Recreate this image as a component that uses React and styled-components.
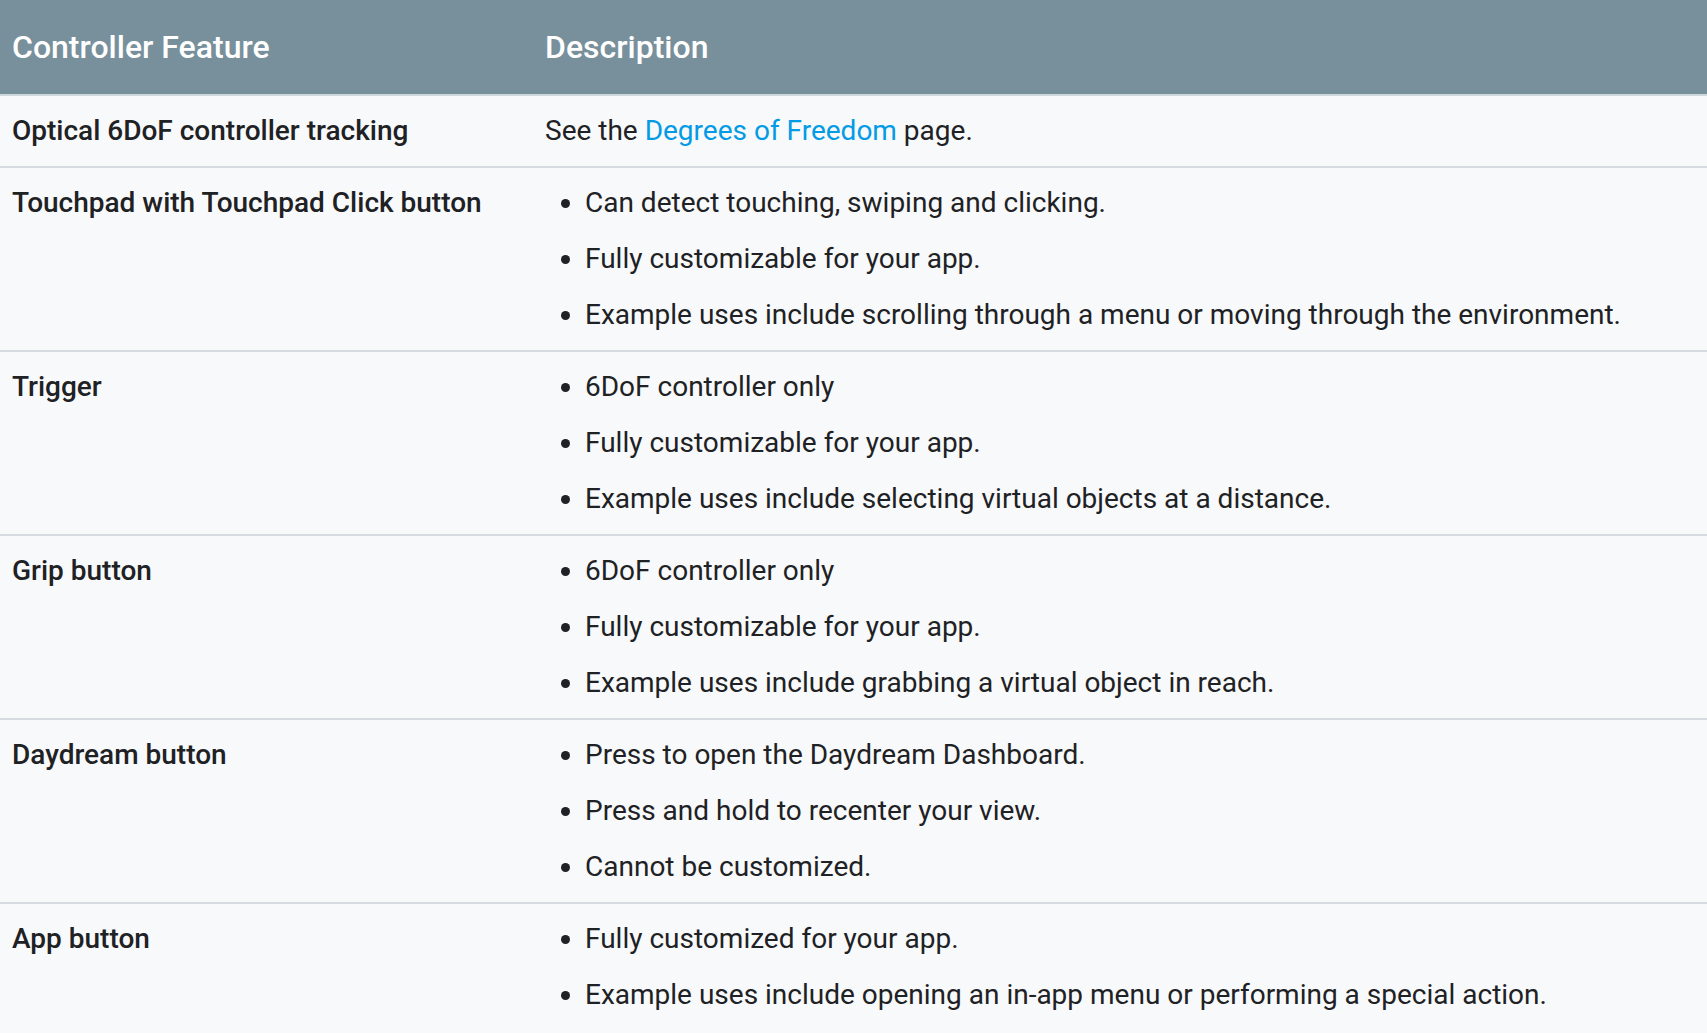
import React from 'react';
import styled, { createGlobalStyle } from 'styled-components';

const GlobalStyle = createGlobalStyle`
  html, body {
    margin: 0;
    padding: 0;
    background: #f8f9fa;
  }
  body {
    font-family: Roboto, "Noto Sans", "Liberation Sans", sans-serif;
    color: #202124;
  }
`;

const Table = styled.table`
  width: 100%;
  border-collapse: collapse;
  table-layout: fixed;
  background: #f8f9fa;
`;

const HeadCell = styled.th`
  background: #78909c;
  color: #fff;
  text-align: left;
  font-size: 32px;
  font-weight: 500;
  line-height: 42px;
  padding: 26px 12px;
  border-bottom: 2px solid #cfd8dc;
  width: ${(p) => p.$width || 'auto'};
`;

const Row = styled.tr`
  & + & td {
    border-top: 2px solid #d5dbe0;
  }
`;

const FeatureCell = styled.td`
  vertical-align: top;
  padding: 14px 12px;
  font-size: 28px;
  line-height: 42px;
  font-weight: 500;
`;

const DescCell = styled.td`
  vertical-align: top;
  padding: 14px 12px;
  font-size: 28px;
  line-height: 42px;
  font-weight: 400;
`;

const List = styled.ul`
  margin: 0;
  padding-left: 40px;
`;

const Item = styled.li`
  & + & {
    margin-top: 14px;
  }
`;

const Link = styled.a`
  color: #039be5;
  text-decoration: none;
`;

const rows = [
  {
    feature: 'Touchpad with Touchpad Click button',
    items: [
      'Can detect touching, swiping and clicking.',
      'Fully customizable for your app.',
      'Example uses include scrolling through a menu or moving through the environment.',
    ],
  },
  {
    feature: 'Trigger',
    items: [
      '6DoF controller only',
      'Fully customizable for your app.',
      'Example uses include selecting virtual objects at a distance.',
    ],
  },
  {
    feature: 'Grip button',
    items: [
      '6DoF controller only',
      'Fully customizable for your app.',
      'Example uses include grabbing a virtual object in reach.',
    ],
  },
  {
    feature: 'Daydream button',
    items: [
      'Press to open the Daydream Dashboard.',
      'Press and hold to recenter your view.',
      'Cannot be customized.',
    ],
  },
  {
    feature: 'App button',
    items: [
      'Fully customized for your app.',
      'Example uses include opening an in-app menu or performing a special action.',
    ],
  },
];

const App = () => (
  <>
    <GlobalStyle />
    <Table>
      <thead>
        <tr>
          <HeadCell $width="509px">Controller Feature</HeadCell>
          <HeadCell>Description</HeadCell>
        </tr>
      </thead>
      <tbody>
        <Row>
          <FeatureCell>Optical 6DoF controller tracking</FeatureCell>
          <DescCell>
            See the <Link href="#">Degrees of Freedom</Link> page.
          </DescCell>
        </Row>
        {rows.map((row) => (
          <Row key={row.feature}>
            <FeatureCell>{row.feature}</FeatureCell>
            <DescCell>
              <List>
                {row.items.map((item) => (
                  <Item key={item}>{item}</Item>
                ))}
              </List>
            </DescCell>
          </Row>
        ))}
      </tbody>
    </Table>
  </>
);

export default App;
